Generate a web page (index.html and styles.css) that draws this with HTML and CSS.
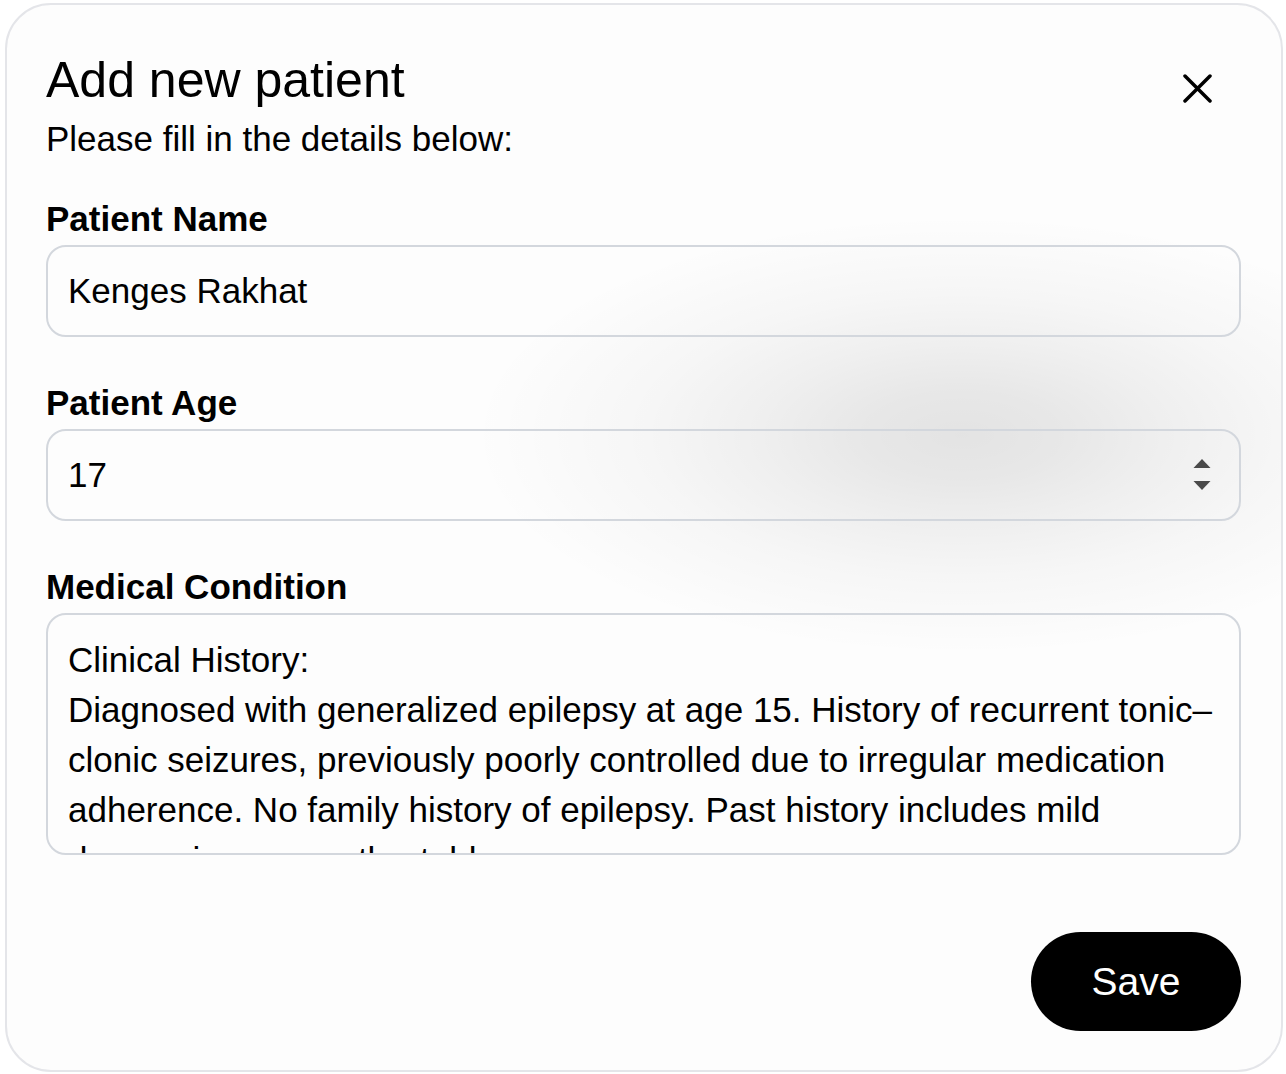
FILE: index.html
```html
<!DOCTYPE html>
<html lang="en">
<head>
<meta charset="utf-8">
<title>Add new patient</title>
<link rel="stylesheet" href="styles.css">
</head>
<body>
<div class="dialog">
  <div class="header">
    <h1 class="title">Add new patient</h1>
    <button class="close" type="button" aria-label="Close">
      <svg width="29" height="29" viewBox="0 0 29 29"><path d="M2 2 L27 27 M27 2 L2 27" stroke="#000" stroke-width="3.5" stroke-linecap="round" fill="none"/></svg>
    </button>
  </div>
  <p class="subtitle">Please fill in the details below:</p>
  <form class="form">
    <div class="field">
      <label class="label" for="name">Patient Name</label>
      <input class="input" id="name" type="text" value="Kenges Rakhat">
    </div>
    <div class="field">
      <label class="label" for="age">Patient Age</label>
      <div class="input number">
        <input class="number-input" id="age" type="number" value="17">
        <svg class="spinner" width="18" height="32" viewBox="0 0 18 32"><path d="M9 0 L17.5 9 L0.5 9 Z" fill="#4a4a4a"/><path d="M0.5 22 L17.5 22 L9 31 Z" fill="#4a4a4a"/></svg>
      </div>
    </div>
    <div class="field">
      <label class="label" for="cond">Medical Condition</label>
      <textarea class="textarea" id="cond">Clinical History:
Diagnosed with generalized epilepsy at age 15. History of recurrent tonic–clonic seizures, previously poorly controlled due to irregular medication adherence. No family history of epilepsy. Past history includes mild depression, currently stable.</textarea>
    </div>
    <div class="actions">
      <button class="save" type="button">Save</button>
    </div>
  </form>
</div>
</body>
</html>
```

FILE: styles.css
```css
html, body {
  margin: 0;
  background: #ffffff;
}
body {
  padding: 3px 3px 2px 5px;
  font-family: "Liberation Sans", Arial, sans-serif;
  color: #000;
}
.dialog {
  box-sizing: border-box;
  width: 1278px;
  border: 2px solid #e4e5e9;
  border-radius: 46px;
  background-color: #fdfdfd;
  background-image: radial-gradient(ellipse 490px 220px at 955px 430px, rgba(0,0,0,0.1) 0%, rgba(0,0,0,0.085) 20%, rgba(0,0,0,0.055) 42%, rgba(0,0,0,0.028) 65%, rgba(0,0,0,0.01) 85%, rgba(0,0,0,0) 100%);
  padding: 46px 40px 39px 39px;
}
.header {
  display: flex;
  justify-content: space-between;
  align-items: flex-start;
}
.title {
  margin: 0;
  font-size: 50px;
  line-height: 58px;
  font-weight: 400;
}
.close {
  margin: 23px 29px 0 0;
  padding: 0;
  border: 0;
  background: transparent;
  width: 29px;
  height: 29px;
  display: flex;
}
.subtitle {
  margin: 9px 0 0 0;
  font-size: 35px;
  line-height: 42px;
}
.form {
  margin-top: 39px;
  display: flex;
  flex-direction: column;
  gap: 46px;
}
.field {
  display: flex;
  flex-direction: column;
  gap: 6px;
}
.label {
  font-size: 35px;
  line-height: 40px;
  font-weight: 700;
}
.input {
  box-sizing: border-box;
  height: 92px;
  border: 2px solid #d3d7dd;
  border-radius: 20px;
  background: transparent;
  padding: 0 18px 0 20px;
  font-family: inherit;
  font-size: 35px;
  color: #000;
  outline: none;
}
.number {
  display: flex;
  align-items: center;
}
.number-input {
  flex: 1;
  border: 0;
  background: transparent;
  padding: 0;
  font-family: inherit;
  font-size: 35px;
  color: #000;
  outline: none;
  -moz-appearance: textfield;
}
.number-input::-webkit-inner-spin-button,
.number-input::-webkit-outer-spin-button {
  -webkit-appearance: none;
  margin: 0;
}
.spinner {
  margin-right: 10px;
}
.textarea {
  box-sizing: border-box;
  height: 242px;
  border: 2px solid #d3d7dd;
  border-radius: 20px;
  background: transparent;
  padding: 20px 17px 20px 20px;
  font-family: inherit;
  font-size: 35px;
  line-height: 50px;
  color: #000;
  resize: none;
  overflow: hidden;
  outline: none;
}
.actions {
  display: flex;
  justify-content: flex-end;
  margin-top: 31px;
}
.save {
  width: 210px;
  height: 99px;
  border: 0;
  border-radius: 50px;
  background: #000;
  color: #fff;
  font-family: inherit;
  font-size: 39px;
}
```
